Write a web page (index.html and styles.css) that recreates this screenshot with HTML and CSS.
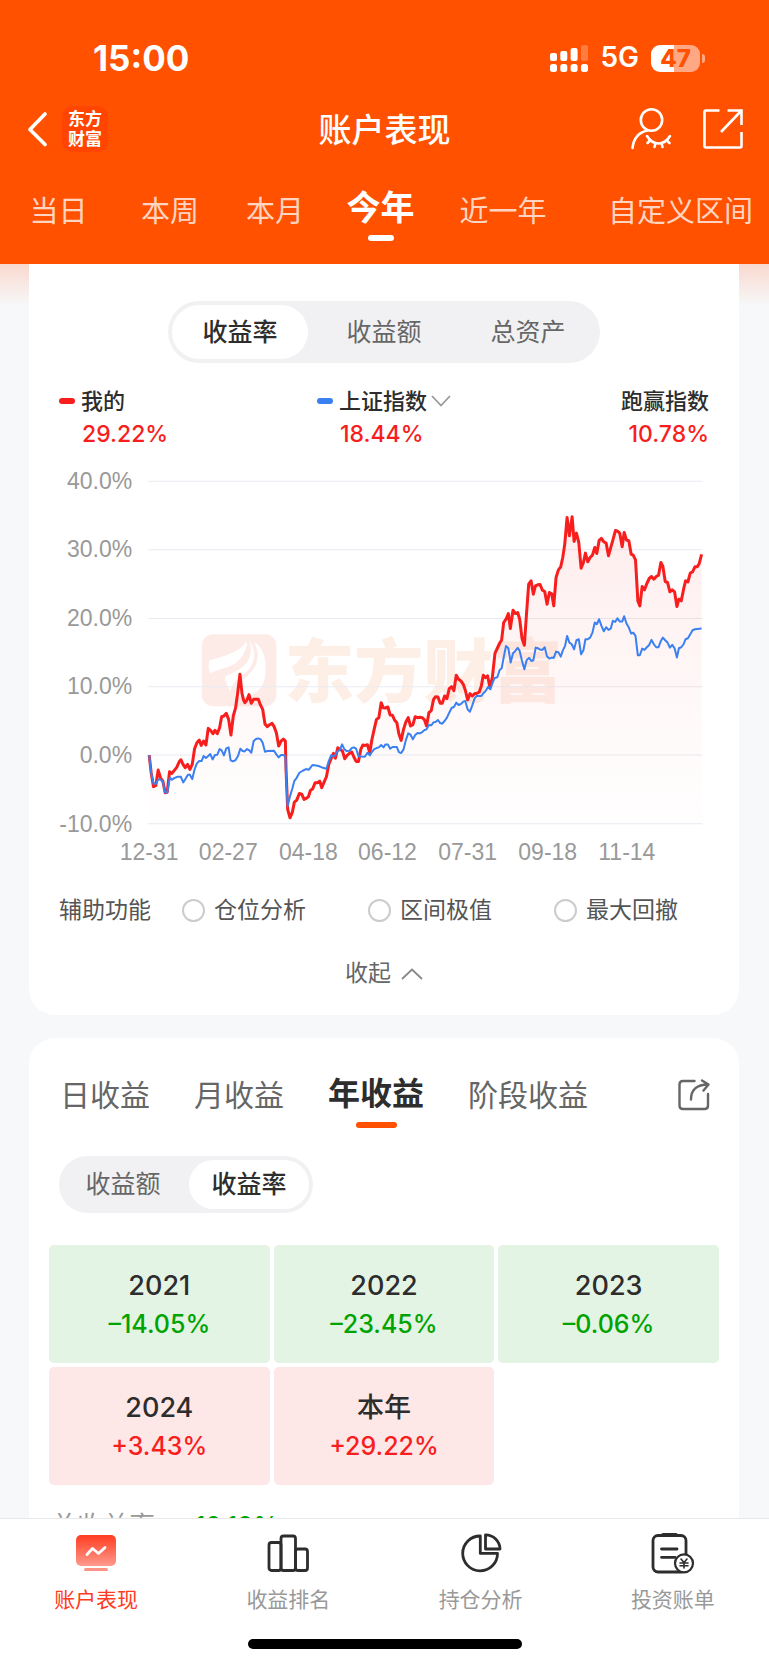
FILE: index.html
```html
<!DOCTYPE html>
<html lang="zh-CN">
<head>
    <meta charset="UTF-8">
    <meta name="viewport" content="width=device-width, initial-scale=1.0">
    <title>账户表现</title>
    <link rel="stylesheet" href="styles.css">
</head>
<body>
    <header class="header">
        <div class="status">
            <span class="time">15:00</span>
            <div class="status-right">
                <svg class="signal" width="38" height="27" viewBox="0 0 38 27" fill="#fff">
                    <rect x="0" y="8" width="7" height="8" rx="2"/>
                    <rect x="10.3" y="6" width="7" height="10" rx="2"/>
                    <rect x="20.6" y="3" width="7" height="13" rx="2"/>
                    <rect x="31" y="0" width="7" height="16" rx="2" opacity=".25"/>
                    <rect x="0" y="19" width="7" height="8" rx="2.5"/>
                    <rect x="10.3" y="19" width="7" height="8" rx="2.5"/>
                    <rect x="20.6" y="19" width="7" height="8" rx="2.5"/>
                    <rect x="31" y="19" width="7" height="8" rx="2.5"/>
                </svg>
                <span class="network">5G</span>
                <span class="battery">47</span>
            </div>
        </div>

        <div class="navbar">
            <div class="nav-side">
                <button class="icon-btn" aria-label="返回">
                    <svg width="22" height="36" viewBox="0 0 22 36" fill="none" stroke="#fff" stroke-width="3.6" stroke-linecap="round" stroke-linejoin="round"><path d="M20 3 5 18.500 20 33.500"/></svg>
                </button>
                <span class="app-logo">东方<br>财富</span>
            </div>
            <h1>账户表现</h1>
            <div class="nav-side nav-right">
                <button class="icon-btn" aria-label="隐藏账户">
                    <svg width="42" height="42" viewBox="0 0 42 42" fill="none" stroke="#fff" stroke-width="2.6" stroke-linecap="round">
                        <circle cx="21.500" cy="12" r="10.700"/>
                        <path d="M17.500 22.500C8 24.500 3.500 31 2.500 40"/>
                        <path d="M17 28c3 5 7 7.500 11.500 7.500S37 33 40 28"/>
                        <path d="M20 32.500 17.500 35M25.500 35 24.500 39M31.500 35l1 4M36.800 32.500 39.500 35"/>
                    </svg>
                </button>
                <button class="icon-btn" aria-label="分享">
                    <svg width="42" height="42" viewBox="0 0 42 42" fill="none" stroke="#fff" stroke-width="2.600">
                        <path d="M17.500 2.500H4q-1.500 0-1.500 1.500v34q0 1.500 1.500 1.500h34q1.500 0 1.500-1.500V24"/>
                        <path d="M25.500 2.500h14V17M39 3 19 24"/>
                    </svg>
                </button>
            </div>
        </div>

        <nav class="periods">
            <button>当日</button>
            <button>本周</button>
            <button>本月</button>
            <button class="active">今年</button>
            <button>近一年</button>
            <button>自定义区间</button>
        </nav>
    </header>

    <main class="content">
        <section class="card chart-card">
            <div class="segment">
                <button class="active">收益率</button>
                <button>收益额</button>
                <button>总资产</button>
            </div>

            <div class="legend">
                <div class="legend-item">
                    <div class="legend-name"><i class="mark mark-red"></i>我的</div>
                    <div class="legend-value">29.22%</div>
                </div>
                <div class="legend-item">
                    <button class="legend-name"><i class="mark mark-blue"></i>上证指数
                        <svg class="chevron" width="20" height="12" viewBox="0 0 20 12" fill="none" stroke="#999" stroke-width="1.800"><path d="M1 1l9 9.500L19 1"/></svg>
                    </button>
                    <div class="legend-value">18.44%</div>
                </div>
                <div class="legend-item">
                    <div class="legend-name legend-last">跑赢指数</div>
                    <div class="legend-value legend-last">10.78%</div>
                </div>
            </div>

            <svg class="chart" viewBox="0 0 709 405" role="img" aria-label="收益率走势">
                <svg x="110" y="5" width="640" height="370" viewBox="0 0 1920 1110">
                    <defs>
                        <linearGradient id="area" gradientUnits="userSpaceOnUse" x1="0" y1="140" x2="0" y2="1063">
                            <stop offset="0" stop-color="#f81e1e" stop-opacity=".08"/>
                            <stop offset=".75" stop-color="#f81e1e" stop-opacity=".02"/>
                            <stop offset="1" stop-color="#f81e1e" stop-opacity=".005"/>
                        </linearGradient>
                    </defs>
                    <!-- watermark -->
                    <rect x="188" y="495" width="223" height="216" rx="34" fill="#fdebe8"/>
                    <path fill="#fff" d="M209 574C250 560 300 552 322 515C326 545 300 580 270 592C250 600 228 604 212 612Q206 594 209 574Z"/>
                    <path fill="#fff" d="M329 512C344 548 330 582 300 600C282 611 264 616 256 625Q260 645 273 665C280 630 318 620 336 590C350 565 346 535 329 512Z"/>
                    <path fill="#fff" d="M345 518C366 560 352 596 326 618C304 636 290 655 286 680C330 692 366 668 376 628C384 586 378 540 345 518Z"/>
                    <text class="watermark" x="436" y="682">东方财富</text>
                    <path stroke="#e9ebf2" stroke-width="3" d="M26 37H1688M26 242H1688M26 448H1688M26 652H1688M26 857H1688M26 1063H1688"/>
                    <path id="fill" fill="url(#area)"/>
                    <polyline id="mine" fill="none" stroke="#f81e1e" stroke-width="9" stroke-linejoin="round" points="30,857 36,910 43,952 50,948 57,902 64,925 71,935 78,970 84,968 91,907 98,912 106,902 113,893 120,877 125,871 131,884 138,895 145,885 152,900 159,885 166,838 173,820 180,812 186,828 193,815 200,827 207,777 214,783 221,793 227,783 234,793 241,775 247,742 254,740 261,732 268,750 275,797 282,740 289,715 295,672 302,615 308,672 313,693 317,700 323,692 329,676 336,702 343,690 357,690 363,706 370,720 377,764 384,772 391,766 398,762 404,771 411,790 418,830 425,815 432,809 438,815 440,900 445,1020 452,1045 459,1028 465,998 472,992 480,972 487,974 494,990 500,987 507,982 513,963 520,958 527,940 534,940 541,935 547,955 554,938 561,922 568,885 575,868 582,852 588,866 595,835 602,840 609,845 616,868 623,858 630,852 637,848 643,862 650,876 657,876 664,840 670,827 677,828 684,826 691,850 697,812 704,780 711,750 718,745 725,700 731,715 738,716 745,713 752,737 759,738 765,752 772,760 778,793 785,813 792,780 799,758 806,745 813,770 820,766 827,742 834,745 841,744 848,745 855,752 861,770 868,730 875,724 882,690 888,682 895,683 902,702 908,702 915,680 922,688 929,658 936,652 943,664 950,618 957,630 964,635 971,645 977,662 984,692 991,673 998,680 1005,673 1012,672 1019,668 1025,650 1031,618 1038,625 1044,620 1051,655 1058,625 1066,552 1073,537 1080,522 1086,512 1092,460 1099,450 1106,433 1112,478 1120,423 1127,433 1134,430 1140,450 1147,508 1154,528 1160,440 1167,345 1174,335 1181,375 1187,350 1194,347 1201,346 1208,363 1215,367 1222,405 1229,370 1236,374 1242,410 1249,325 1256,302 1263,293 1269,265 1275,225 1282,145 1289,200 1297,143 1303,217 1310,192 1317,220 1324,297 1331,280 1337,252 1344,278 1351,265 1358,258 1365,235 1371,253 1378,214 1385,208 1392,218 1399,222 1406,260 1413,235 1420,210 1427,184 1434,187 1440,193 1447,233 1453,190 1460,213 1467,215 1474,255 1480,258 1487,272 1494,395 1500,410 1507,352 1514,362 1521,343 1528,328 1535,322 1542,330 1549,322 1556,318 1563,280 1569,292 1576,337 1583,340 1590,368 1597,362 1604,368 1611,412 1617,390 1624,395 1631,360 1637,335 1644,338 1651,312 1658,308 1665,293 1672,293 1678,283 1685,256"/>
                    <polyline fill="none" stroke="#3a80f0" stroke-width="6" stroke-linejoin="round" points="30,857 36,910 43,943 50,943 57,930 64,930 71,937 77,968 84,970 92,925 98,931 105,926 115,922 125,922 132,939 139,928 146,916 152,916 159,929 166,900 173,882 180,875 187,875 193,860 200,866 207,860 213,854 220,870 227,857 234,856 241,839 247,843 254,858 261,837 268,834 274,873 281,876 289,872 296,860 303,838 310,845 316,846 323,839 330,843 336,850 343,815 350,809 357,807 364,810 370,820 377,847 384,845 404,844 411,855 418,864 425,857 432,857 438,861 441,940 445,1010 452,980 459,957 465,934 472,925 480,910 490,904 500,899 508,901 519,887 535,889 548,894 561,898 568,875 575,858 582,861 588,857 595,845 601,842 608,825 615,840 622,845 630,844 637,836 643,834 650,838 657,860 664,861 676,862 684,850 691,858 697,848 704,839 711,836 718,834 725,827 732,834 738,825 745,825 752,838 759,833 772,833 778,848 785,851 792,840 799,812 806,792 813,796 820,810 827,797 834,791 841,792 848,788 855,782 861,780 868,767 875,768 882,759 888,758 895,752 902,761 908,763 915,755 922,745 929,730 936,716 943,713 950,700 957,707 964,704 971,697 977,695 984,720 991,727 998,708 1005,687 1012,679 1019,680 1025,680 1031,672 1038,665 1045,653 1052,660 1059,640 1065,626 1073,624 1080,602 1086,597 1093,560 1099,530 1106,537 1113,580 1120,552 1127,545 1134,536 1140,545 1147,575 1154,600 1161,572 1168,566 1175,575 1181,573 1188,535 1195,537 1201,541 1208,542 1215,534 1222,562 1229,568 1236,565 1242,566 1249,547 1256,549 1263,562 1269,544 1276,530 1282,500 1289,520 1296,525 1303,540 1310,513 1317,510 1324,555 1331,543 1337,510 1344,510 1351,505 1358,490 1365,460 1371,465 1378,450 1385,470 1392,486 1399,474 1406,482 1413,478 1419,455 1426,458 1433,447 1440,457 1447,457 1453,441 1460,463 1467,475 1474,493 1480,490 1487,500 1494,558 1500,558 1507,538 1514,542 1521,534 1528,527 1535,512 1542,525 1549,534 1556,534 1563,515 1569,505 1576,513 1583,520 1590,535 1597,527 1604,537 1611,565 1617,537 1624,534 1631,525 1637,510 1644,507 1651,495 1658,483 1665,480 1685,478"/>
                </svg>
                <g class="axis axis-y">
                    <text x="103" y="25">40.0%</text>
                    <text x="103" y="93">30.0%</text>
                    <text x="103" y="162">20.0%</text>
                    <text x="103" y="230">10.0%</text>
                    <text x="103" y="299">0.0%</text>
                    <text x="103" y="367">-10.0%</text>
                </g>
                <g class="axis axis-x">
                    <text x="120" y="395">12-31</text>
                    <text x="199" y="395">02-27</text>
                    <text x="279" y="395">04-18</text>
                    <text x="358" y="395">06-12</text>
                    <text x="438" y="395">07-31</text>
                    <text x="518" y="395">09-18</text>
                    <text x="597" y="395">11-14</text>
                </g>
            </svg>

            <div class="assist">
                <span>辅助功能</span>
                <div class="assist-options">
                    <label><input type="checkbox">仓位分析</label>
                    <label><input type="checkbox">区间极值</label>
                    <label><input type="checkbox">最大回撤</label>
                </div>
            </div>

            <button class="collapse">收起
                <svg width="22" height="12" viewBox="0 0 22 12" fill="none" stroke="#888" stroke-width="1.800"><path d="M1 11 11 1.500 21 11"/></svg>
            </button>
        </section>

        <section class="card profit-card">
            <div class="profit-head">
                <div class="profit-tabs">
                    <button>日收益</button>
                    <button>月收益</button>
                    <button class="active">年收益</button>
                    <button>阶段收益</button>
                </div>
                <button class="icon-btn" aria-label="分享收益">
                    <svg width="32" height="32" viewBox="0 0 32 32" fill="none" stroke="#666" stroke-width="2.400" stroke-linecap="round" stroke-linejoin="round">
                        <path d="M16.500 2H5Q1.500 2 1.500 5.500v21Q1.500 30 5 30h21.500q3.500 0 3.500-3.500V15"/>
                        <path d="M13 20.500C13 11 18.500 5.500 30 5.500M24 1.500l6.500 4L25.500 11.500"/>
                    </svg>
                </button>
            </div>

            <div class="segment segment-small">
                <button>收益额</button>
                <button class="active">收益率</button>
            </div>

            <div class="years">
                <div class="year down"><b>2021</b><span>–14.05%</span></div>
                <div class="year down"><b>2022</b><span>–23.45%</span></div>
                <div class="year down"><b>2023</b><span>–0.06%</span></div>
                <div class="year up"><b>2024</b><span>+3.43%</span></div>
                <div class="year up"><b>本年</b><span>+29.22%</span></div>
            </div>

            <div class="total">总收益率<span>–12.12%</span></div>
        </section>
    </main>

    <footer class="footer">
        <nav class="tabbar">
            <a href="#" class="active">
                <svg width="44" height="44" viewBox="0 0 44 44">
                    <defs>
                        <linearGradient id="tabRed" x1="0" y1="0" x2="0" y2="1">
                            <stop offset="0" stop-color="#ff3c22"/>
                            <stop offset="1" stop-color="#ff9a8c"/>
                        </linearGradient>
                    </defs>
                    <rect x="2" y="4" width="40" height="31" rx="5" fill="url(#tabRed)"/>
                    <rect x="10" y="37" width="24" height="3" rx="1.500" fill="#ff9385"/>
                    <path d="M13 23.500 18.500 17.500 24.500 22.500 31 16.500" fill="none" stroke="#fff" stroke-width="2.800" stroke-linecap="round" stroke-linejoin="round"/>
                </svg>
                账户表现
            </a>
            <a href="#">
                <svg width="44" height="44" viewBox="0 0 44 44" fill="none" stroke="#2d2d2d" stroke-width="2.800">
                    <rect x="3" y="11.500" width="12" height="28" rx="2.500"/>
                    <rect x="15" y="5" width="14.500" height="34.500" rx="2.500"/>
                    <rect x="29.500" y="18" width="12" height="21.500" rx="2.500"/>
                </svg>
                收益排名
            </a>
            <a href="#">
                <svg width="44" height="44" viewBox="0 0 44 44" fill="none" stroke="#2d2d2d" stroke-width="2.800" stroke-linejoin="round">
                    <path d="M21.300 5V22.400H38.500A17.400 17.400 0 1 1 21.300 5Z"/>
                    <path d="M26.500 3.800V18H41A14.400 14.400 0 0 0 26.500 3.800Z"/>
                </svg>
                持仓分析
            </a>
            <a href="#">
                <svg width="44" height="44" viewBox="0 0 44 44" fill="none" stroke="#2d2d2d" stroke-width="2.800" stroke-linecap="round">
                    <rect x="2" y="4.500" width="33" height="36.500" rx="5"/>
                    <path d="M12 3.800H25" stroke-width="3.400"/>
                    <path d="M10.500 18H26M10.500 26.300H24"/>
                    <circle cx="33" cy="32.300" r="9" fill="#fff" stroke-width="2.200"/>
                    <path d="M30 28l3 3.500L36 28M33 31.500V37M29 32h8M29 34.800h8" stroke-width="1.600"/>
                </svg>
                投资账单
            </a>
        </nav>
        <div class="home-bar"></div>
    </footer>

    <script>
        // close the curve down to the base line for the shaded area
        const points = document.getElementById('mine').getAttribute('points');
        document.getElementById('fill').setAttribute('d', 'M30,1063 L' + points + ' L1685,1063 Z');
    </script>
</body>
</html>
```
FILE: styles.css
```css
* {
    box-sizing: border-box;
}
body {
    margin: 0;
    height: 100vh;
    display: flex;
    flex-direction: column;
    overflow: hidden;
    background: #f7f8fa;
    color: #2d2d2d;
    font-family: Inter, "Noto Sans CJK SC", sans-serif;
    line-height: 1.2;
}
button {
    padding: 0;
    border: none;
    background: none;
    color: inherit;
    font: inherit;
    cursor: pointer;
}
svg {
    display: block;
    flex-shrink: 0;
}

/* header */
.header {
    flex-shrink: 0;
    padding-top: 38px;
    background: #ff5100;
    color: #fff;
}
.status {
    display: flex;
    justify-content: space-between;
    align-items: center;
    height: 40px;
    padding: 0 69px 0 93px;
}
.time {
    font-size: 35px;
    font-weight: 700;
}
.status-right {
    display: flex;
    align-items: center;
    gap: 12px;
}
.network {
    font-size: 28px;
    font-weight: 600;
}
.battery {
    position: relative;
    width: 49px;
    height: 27px;
    border-radius: 9px;
    background: linear-gradient(90deg, #fff 47%, #ffa883 47%);
    color: #ff5100;
    font-size: 24px;
    font-weight: 800;
    line-height: 27px;
    text-align: center;
}
.battery::after {
    content: "";
    position: absolute;
    left: 51px;
    top: 9px;
    width: 3px;
    height: 9px;
    border-radius: 0 3px 3px 0;
    background: #ffa883;
}
.navbar {
    display: flex;
    align-items: center;
    height: 56px;
    margin-top: 23px;
    padding: 0 25px;
}
.nav-side {
    display: flex;
    flex: 1;
    align-items: center;
    gap: 15px;
}
.nav-right {
    justify-content: flex-end;
    gap: 30px;
}
.app-logo {
    width: 46px;
    height: 46px;
    padding-top: 3px;
    border-radius: 10px;
    background: #ff4500;
    font-size: 17px;
    font-weight: 700;
    line-height: 20px;
    text-align: center;
}
h1 {
    margin: 0;
    padding-top: 3px;
    font-size: 33px;
    font-weight: 500;
}
.periods {
    display: grid;
    grid-template-columns: 117fr 106fr 104fr 107fr 138fr 197fr;
    align-items: center;
    height: 107px;
    padding-top: 4px;
}
.periods button {
    color: #ffd5c2;
    font-size: 29px;
    white-space: nowrap;
}
.periods button:last-child {
    padding-right: 16px;
    text-align: right;
}
.periods .active {
    position: relative;
    padding-bottom: 8px;
    color: #fff;
    font-size: 34px;
    font-weight: 700;
}
.periods .active::after {
    content: "";
    position: absolute;
    left: 50%;
    bottom: -4px;
    width: 26px;
    height: 6px;
    margin-left: -13px;
    border-radius: 3px;
    background: #fff;
}

/* cards */
.content {
    flex: 1;
    min-height: 0;
    overflow: hidden;
    padding: 0 30px 0 29px;
    background: linear-gradient(#f9d9ce, #f7f8fa 42px);
}
.card {
    background: #fff;
    border-radius: 26px;
}
.chart-card {
    padding: 37px 0 25px;
    border-radius: 0 0 26px 26px;
}
.segment {
    display: flex;
    gap: 8px;
    width: fit-content;
    margin: 0 auto;
    padding: 4px;
    border-radius: 31px;
    background: #f1f1f3;
}
.segment button {
    width: 136px;
    height: 54px;
    border-radius: 27px;
    color: #666;
    font-size: 25px;
}
.segment .active {
    background: #fff;
    color: #2d2d2d;
    font-weight: 500;
}
.segment-small {
    gap: 6px;
    margin: 39px 30px 32px;
}
.segment-small button {
    width: 120px;
    height: 49px;
}
.legend {
    display: grid;
    grid-template-columns: 1fr auto 1fr;
    margin-top: 22px;
    padding: 0 30px;
}
.legend-name {
    display: flex;
    align-items: center;
    height: 32px;
    font-size: 22px;
    font-weight: 500;
}
.legend-value {
    height: 34px;
    padding-left: 23px;
    color: #f81e1e;
    font-size: 23px;
    font-weight: 500;
    line-height: 34px;
}
.legend-last {
    justify-content: flex-end;
    padding-left: 0;
    text-align: right;
}
.mark {
    width: 16px;
    height: 6px;
    margin-right: 6px;
    border-radius: 3px;
}
.mark-red {
    background: #f81e1e;
}
.mark-blue {
    background: #3a80f0;
}
.chevron {
    margin-left: 4px;
}
.chart {
    width: 100%;
    margin-top: 13px;
}
.axis {
    fill: #999;
    font-family: "Liberation Sans", sans-serif;
    font-size: 23px;
}
.axis-y {
    text-anchor: end;
}
.axis-x {
    text-anchor: middle;
}
.watermark {
    fill: #fdeee6;
    font-family: "Noto Sans CJK SC", sans-serif;
    font-size: 208px;
    font-weight: 900;
}
.assist {
    display: flex;
    align-items: center;
    gap: 31px;
    height: 32px;
    margin-top: 25px;
    padding-left: 30px;
    color: #555;
    font-size: 23px;
}
.assist-options {
    display: flex;
    gap: 62px;
}
.assist label {
    display: flex;
    align-items: center;
    gap: 9px;
}
.assist input {
    appearance: none;
    width: 23px;
    height: 23px;
    margin: 0;
    border: 2px solid #ccc;
    border-radius: 50%;
}
.assist input:checked {
    border: 7px solid #ff5100;
}
.collapse {
    display: flex;
    align-items: center;
    gap: 10px;
    height: 32px;
    margin: 31px auto 0;
    color: #666;
    font-size: 23px;
}

/* profit */
.profit-card {
    margin-top: 23px;
    padding: 35px 0 60px;
}
.profit-head {
    display: flex;
    justify-content: space-between;
    align-items: center;
    height: 44px;
    padding: 0 29px 0 31px;
}
.profit-tabs {
    display: flex;
    align-items: center;
    gap: 44px;
}
.profit-tabs button {
    height: 44px;
    color: #666;
    font-size: 30px;
}
.profit-tabs .active {
    position: relative;
    color: #2d2d2d;
    font-size: 32px;
    font-weight: 700;
}
.profit-tabs .active::after {
    content: "";
    position: absolute;
    left: 50%;
    bottom: -11px;
    width: 41px;
    height: 6px;
    margin-left: -20px;
    border-radius: 3px;
    background: #ff5100;
}
.years {
    display: grid;
    grid-template-columns: repeat(3, 1fr);
    gap: 4px;
    padding: 0 20px;
}
.year {
    display: flex;
    flex-direction: column;
    height: 118px;
    padding-top: 22px;
    border-radius: 5px;
    font-size: 25px;
    font-weight: 500;
    line-height: 38px;
    text-align: center;
}
.year b {
    color: #2d2d2d;
    font-size: 27px;
    font-weight: 500;
}
.down {
    background: #e4f4e4;
    color: #00a300;
}
.up {
    background: #fde7e7;
    color: #f81e1e;
}
.total {
    margin-top: 23px;
    padding-left: 22px;
    color: #999;
    font-size: 26px;
    line-height: 36px;
}
.total span {
    margin-left: 27px;
    color: #00a300;
}

/* bottom bar */
.footer {
    flex-shrink: 0;
    height: 147px;
    padding-top: 12px;
    border-top: 1px solid #e8e8e8;
    background: #fff;
}
.tabbar {
    display: grid;
    grid-template-columns: repeat(4, 1fr);
}
.tabbar a {
    display: flex;
    flex-direction: column;
    align-items: center;
    gap: 9px;
    color: #999;
    font-size: 21px;
    line-height: 32px;
    text-decoration: none;
}
.tabbar .active {
    color: #ff3c22;
}
.home-bar {
    width: 274px;
    height: 10px;
    margin: 23px auto 0;
    border-radius: 5px;
    background: #000;
}
```
